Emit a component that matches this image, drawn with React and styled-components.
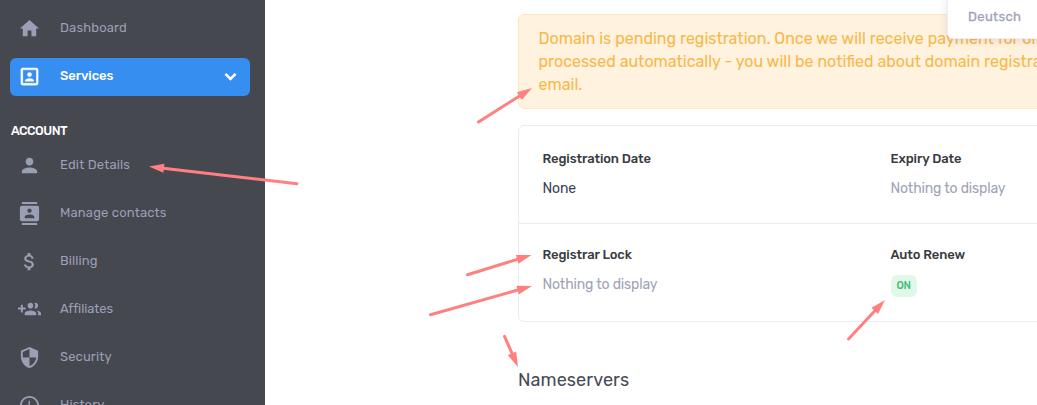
import React from "react";
import styled, { createGlobalStyle } from "styled-components";
import {
  MdHome, MdPerson, MdContacts, MdAttachMoney, MdSecurity, MdAccessTime,
} from "react-icons/md";

const Global = createGlobalStyle`
  * { box-sizing: border-box; }
  body { margin: 0; background: #fff; overflow: hidden; font-family: Rubik, Roboto, "Liberation Sans", sans-serif; }
`;
const Page = styled.div`
  position: relative; display: flex; width: 1037px; height: 405px; overflow: hidden;
`;
const Sidebar = styled.nav`
  flex: 0 0 265px; height: 405px; padding: 10px 15px 0 10px; background: #464850; overflow: hidden;
`;
const NavItem = styled.div`
  display: flex; align-items: center; height: 38px; margin-bottom: 10px;
  padding: 0 8px; border-radius: 6px;
  background: ${(p) => (p.$active ? "#378ef1" : "transparent")};
  color: ${(p) => (p.$active ? "#fff" : "#9a9fb5")};
  svg { flex: none; margin-top: -1px; }
`;
const NavLabel = styled.span`
  flex: 1; margin-left: 19px; padding-bottom: 3px; font-size: 13px; line-height: 18px;
  font-weight: ${(p) => (p.$active ? 500 : 400)}; letter-spacing: ${(p) => p.$track || 0}px; white-space: nowrap;
`;
const NavSection = styled.div`
  height: 41px; padding: 16px 0 0 1px; color: #fff; font-size: 12.5px; font-weight: 500; line-height: 18px;
  letter-spacing: -0.5px;
`;
const Main = styled.main`
  flex: none; width: 1000px; padding: 14px 0 0 253px;
`;
const Alert = styled.div`
  height: 95px; padding: 12px 19.5px; border: 1px solid #ffe8bf; border-radius: 6px;
  background: #fff2df; color: #f8b849; font-size: 16px; line-height: 23px; white-space: nowrap;
`;
const Card = styled.section`
  height: 197px; margin-top: 16px; border: 1px solid #ebebef; border-radius: 6px;
`;
const CardRow = styled.div`
  display: grid; grid-template-columns: 348px 1fr; height: 97px; padding: 23px 23.5px 0;
  & + & { border-top: 1px solid #ebebef; height: 98px; padding-top: 21px; }
`;
const Term = styled.div`
  color: #393b42; font-size: 13px; font-weight: 500; line-height: 20px; letter-spacing: -0.1px;
`;
const Value = styled.div`
  margin-top: 9px; color: ${(p) => (p.$muted ? "#a0a3b8" : "#3b4255")}; font-size: 14px; line-height: 22px;
  letter-spacing: -0.17px;
`;
const Badge = styled.div`
  width: 26px; height: 22px; margin-top: 10px; border-radius: 6px; background: #e0f7e9; color: #3fc179;
  font-size: 10.5px; font-weight: 500; line-height: 21px; text-align: center; letter-spacing: -0.4px;
`;
const Heading = styled.h2`
  margin: 46px 0 0; color: #474952; font-size: 18px; font-weight: 400; line-height: 24px; letter-spacing: 0.08px;
`;
const LanguageMenu = styled.div`
  position: absolute; top: -6px; left: 947px; width: 110px; height: 45px; padding: 14px 0 0 20px;
  border: 1px solid #efeff3; border-radius: 6px; background: #fff; color: #a0a3b8;
  box-shadow: 0 2px 10px rgba(70, 72, 90, 0.14); font-size: 13px; line-height: 16px;
  letter-spacing: 0.35px; -webkit-text-stroke: 0.3px currentColor;
`;
const Annotations = styled.svg`
  position: absolute; top: 0; left: 0; pointer-events: none;
`;

function GroupAddIcon({ size }) {
  return (
    <svg width={size} height={size} viewBox="0 0 24 24" fill="currentColor">
      <path d="M8 10H5V7H3v3H0v2h3v3h2v-3h3v-2zm10 1c1.66 0 2.99-1.34 2.99-3S19.66 5 18 5c-.32 0-.63.05-.91.14.57.81.9 1.79.9 2.86s-.34 2.04-.9 2.86c.28.09.59.14.91.14zm-5 0c1.66 0 2.99-1.34 2.99-3S14.66 5 13 5c-1.66 0-3 1.34-3 3s1.34 3 3 3zm6.62 2.16c.83.73 1.38 1.66 1.38 2.84v2h3v-2c0-1.54-2.37-2.49-4.38-2.84zM13 13c-2 0-6 1-6 3v2h12v-2c0-2-4-3-6-3z" />
    </svg>
  );
}

function AccountBoxIcon({ size }) {
  return (
    <svg width={size} height={size} viewBox="0 0 24 24" fill="currentColor" stroke="currentColor" strokeWidth="0.4">
      <path d="M19 19H5V5h14m0-2H5a2 2 0 0 0-2 2v14a2 2 0 0 0 2 2h14a2 2 0 0 0 2-2V5a2 2 0 0 0-2-2zM16.5 16.25c0-1.5-3-2.25-4.5-2.25s-4.5.75-4.5 2.25V17h9M12 12.25A2.25 2.25 0 1 0 12 7.75a2.25 2.25 0 0 0 0 4.5z" fillRule="evenodd" />
    </svg>
  );
}

function ChevronIcon({ size }) {
  return (
    <svg width={size} height={size} viewBox="0 0 24 24" fill="none" stroke="currentColor" strokeWidth="2.7">
      <path d="M6.7 9.2l5.3 5.3 5.3-5.3" />
    </svg>
  );
}

const mainNav = [
  { icon: MdHome, label: "Dashboard", track: 0.15 },
  { icon: AccountBoxIcon, label: "Services", track: -0.1, active: true },
];
const accountNav = [
  { icon: MdPerson, label: "Edit Details", track: 0.15 },
  { icon: MdContacts, label: "Manage contacts", track: 0.15 },
  { icon: MdAttachMoney, label: "Billing", track: 0.1 },
  { icon: GroupAddIcon, label: "Affiliates", track: -0.1 },
  { icon: MdSecurity, label: "Security", track: 0.12 },
  { icon: MdAccessTime, label: "History", track: 0.12 },
];
const arrows = [
  [297, 183.7, 149, 166.5],
  [478.5, 122, 532, 88],
  [467.5, 274.7, 531.5, 255],
  [430.5, 314.7, 532, 286],
  [504.5, 336.3, 518, 367],
  [848.5, 339, 885, 300],
];

function Nav({ items }) {
  return items.map(({ icon: Icon, label, track, active }) => (
    <NavItem key={label} $active={active}>
      <Icon size={23} />
      <NavLabel $active={active} $track={track}>{label}</NavLabel>
      {active && <ChevronIcon size={23} />}
    </NavItem>
  ));
}

function Arrow({ points: [x1, y1, x2, y2] }) {
  const length = Math.hypot(x2 - x1, y2 - y1);
  const angle = (Math.atan2(y2 - y1, x2 - x1) * 180) / Math.PI;
  return (
    <g transform={`translate(${x1} ${y1}) rotate(${angle})`}>
      <line x1="0" y1="0" x2={length - 12} y2="0" stroke="#ff8080" strokeWidth="3" strokeLinecap="round" />
      <path d={`M${length} 0l-15 -4.6v9.2z`} fill="#ff8080" />
    </g>
  );
}

export default function App() {
  return (
    <Page>
      <Global />
      <Sidebar>
        <Nav items={mainNav} />
        <NavSection>ACCOUNT</NavSection>
        <Nav items={accountNav} />
      </Sidebar>
      <Main>
        <Alert>
          <div>Domain is pending registration. Once we will receive payment for order</div>
          <div>processed automatically - you will be notified about domain registration by</div>
          <div>email.</div>
        </Alert>
        <Card>
          <CardRow>
            <div><Term>Registration Date</Term><Value>None</Value></div>
            <div><Term>Expiry Date</Term><Value $muted>Nothing to display</Value></div>
          </CardRow>
          <CardRow>
            <div><Term>Registrar Lock</Term><Value $muted>Nothing to display</Value></div>
            <div><Term>Auto Renew</Term><Badge>ON</Badge></div>
          </CardRow>
        </Card>
        <Heading>Nameservers</Heading>
      </Main>
      <LanguageMenu>Deutsch</LanguageMenu>
      <Annotations width="1037" height="405">
        {arrows.map((points, i) => <Arrow key={i} points={points} />)}
      </Annotations>
    </Page>
  );
}
